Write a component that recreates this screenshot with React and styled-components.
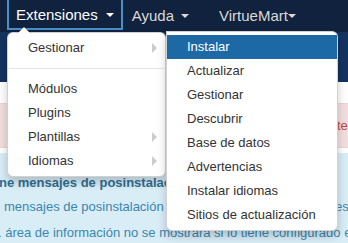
import styled, { createGlobalStyle } from "styled-components";

const GlobalStyle = createGlobalStyle`
  body {
    margin: 0;
    overflow: hidden;
    background: #ffffff;
    font-family: "Liberation Sans", Arial, sans-serif;
  }
`;

const Page = styled.div`
  width: 348px;
  height: 243px;
  overflow: hidden;
`;

const Navbar = styled.nav`
  display: flex;
  align-items: flex-start;
  height: 32px;
  padding-left: 7px;
  background: #10223e;
  position: relative;
  z-index: 5;
`;

const NavItem = styled.div`
  position: relative;
  display: flex;
  align-items: center;
  height: 30px;
  padding: 0 ${(p) => p.$right || "10px"} 0 ${(p) => p.$left || "10px"};
  border: ${(p) => (p.$active ? "2px solid #4a8fc8" : "none")};
  border-top: none;
  box-sizing: border-box;
  font-size: 15px;
  color: ${(p) => (p.$active ? "#ffffff" : "#d9d9d9")};
`;

const Caret = styled.span`
  display: inline-block;
  width: 0;
  height: 0;
  margin-left: ${(p) => p.$gap || "8px"};
  margin-top: 2px;
  border-top: 4px solid currentColor;
  border-left: 4px solid transparent;
  border-right: 4px solid transparent;
`;

const Menu = styled.ul`
  position: absolute;
  list-style: none;
  margin: 0;
  padding: 3px 0;
  background: #ffffff;
  border: 1px solid rgba(0, 0, 0, 0.18);
  box-shadow: 0 5px 10px rgba(0, 0, 0, 0.2);
  box-sizing: border-box;
  font-size: 13px;
  color: #333333;
`;

const MainMenu = styled(Menu)`
  top: 32px;
  left: -2px;
  width: 159px;
  border-radius: 6px;

  &::before {
    content: "";
    position: absolute;
    top: -7px;
    left: 9px;
    border-left: 7px solid transparent;
    border-right: 7px solid transparent;
    border-bottom: 7px solid rgba(0, 0, 0, 0.2);
  }
  &::after {
    content: "";
    position: absolute;
    top: -6px;
    left: 10px;
    border-left: 6px solid transparent;
    border-right: 6px solid transparent;
    border-bottom: 6px solid #ffffff;
  }
`;

const SubMenu = styled(Menu)`
  top: -5px;
  left: calc(100% + 1px);
  width: 172px;
  border-radius: 0 6px 6px 6px;
  z-index: 2;
`;

const Item = styled.li`
  position: relative;
  height: 24px;
  line-height: 24px;
  padding: 0 20px;
  white-space: nowrap;
  background: ${(p) => (p.$active ? "#1d69a6" : "transparent")};
  color: ${(p) => (p.$active ? "#ffffff" : "#333333")};
`;

const SubArrow = styled.span`
  position: absolute;
  right: 8px;
  top: 7px;
  width: 0;
  height: 0;
  border-left: 5px solid #cccccc;
  border-top: 5px solid transparent;
  border-bottom: 5px solid transparent;
`;

const Divider = styled.li`
  height: 1px;
  margin: 8px 1px;
  background: #e5e5e5;
`;

const Header = styled.div`
  height: 50px;
  background: #15335f;
`;

const Content = styled.div`
  padding-top: 21px;
`;

const AlertError = styled.div`
  height: 45px;
  box-sizing: border-box;
  padding-left: 40px;
  background: #f2dede;
  border-top: 1px solid #eed3d7;
  border-bottom: 1px solid #eed3d7;
  color: #b94a48;
  font-size: 13px;
  line-height: 43px;
  white-space: nowrap;
`;

const AlertInfo = styled.div`
  margin-top: 5px;
  padding-top: 20px;
  height: 100px;
  background: #d9edf7;
  color: #3a87ad;
  font-size: 13px;
  white-space: nowrap;
`;

const InfoTitle = styled.h4`
  margin: 0 0 0 -1px;
  font-size: 13px;
  font-weight: bold;
  line-height: 20px;
  color: #2f6f91;
`;

const InfoLine = styled.p`
  margin: ${(p) => p.$top} 0 0 ${(p) => p.$indent};
  line-height: 22px;
`;

const manageItems = [
  "Instalar",
  "Actualizar",
  "Gestionar",
  "Descubrir",
  "Base de datos",
  "Advertencias",
  "Instalar idiomas",
  "Sitios de actualización",
];

export default function App() {
  return (
    <Page>
      <GlobalStyle />
      <Navbar>
        <NavItem $active $left="7px" $right="7px">
          Extensiones
          <Caret />
          <MainMenu>
            <Item>
              Gestionar
              <SubArrow />
              <SubMenu>
                {manageItems.map((label, i) => (
                  <Item key={label} $active={i === 0}>
                    {label}
                  </Item>
                ))}
              </SubMenu>
            </Item>
            <Divider />
            <Item>Módulos</Item>
            <Item>Plugins</Item>
            <Item>
              Plantillas
              <SubArrow />
            </Item>
            <Item>
              Idiomas
              <SubArrow />
            </Item>
          </MainMenu>
        </NavItem>
        <NavItem $left="9px" $right="20px">
          Ayuda
          <Caret $gap="7px" />
        </NavItem>
        <NavItem $left="10px">
          VirtueMart
          <Caret $gap="0" />
        </NavItem>
      </Navbar>
      <Header />
      <Content>
        <AlertError>
          Hay un problema con la base de datos. Revise el intervalo de actualización
        </AlertError>
        <AlertInfo>
          <InfoTitle>ne mensajes de posinstalación</InfoTitle>
          <InfoLine $top="3px" $indent="4px">
            mensajes de posinstalación requieren tu atención, revise este s
          </InfoLine>
          <InfoLine $top="4px" $indent="-2px">
            . área de información no se mostrará si lo tiene configurado en
          </InfoLine>
        </AlertInfo>
      </Content>
    </Page>
  );
}
